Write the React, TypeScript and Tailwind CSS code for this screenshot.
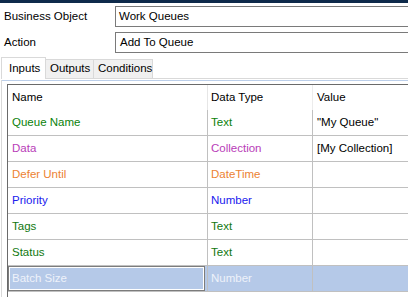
import React from "react";

// Input parameters of the action stage
const rows = [
  { name: "Queue Name", type: "Text", value: "\"My Queue\"", color: "text-[#0a820a]" },
  { name: "Data", type: "Collection", value: "[My Collection]", color: "text-[#b83cb8]" },
  { name: "Defer Until", type: "DateTime", value: "", color: "text-[#ec8232]" },
  { name: "Priority", type: "Number", value: "", color: "text-[#2020ee]" },
  { name: "Tags", type: "Text", value: "", color: "text-[#107810]" },
  { name: "Status", type: "Text", value: "", color: "text-[#107810]" },
];

const App = () => {
  return (
    <div className="w-[408px] h-[297px] overflow-hidden bg-white text-[11.5px] text-black font-['Liberation_Sans',Arial,sans-serif] leading-none">
      {/* title bar edge */}
      <div className="h-[3px] bg-[#0e2a4b]" />

      {/* Business object / action fields */}
      <div className="mt-[3px] flex h-[21px]">
        <div className="w-[115px] pl-[4px] flex items-center">Business Object</div>
        <div className="flex-1 border border-r-0 border-[#7a7a7a] pl-[3px] flex items-center">Work Queues</div>
      </div>
      <div className="mt-[5px] flex h-[21px]">
        <div className="w-[115px] pl-[4px] flex items-center">Action</div>
        <div className="flex-1 border border-r-0 border-[#7a7a7a] pl-[4px] flex items-center">Add To Queue</div>
      </div>

      {/* Tabs */}
      <div className="mt-[4px] ml-[1px] h-[22px] flex items-end border-b border-[#d9d9d9]">
        <div className="relative z-10 -mb-px h-[22px] w-[45px] bg-white border border-b-0 border-[#d9d9d9] pl-[7px] flex items-center">
          Inputs
        </div>
        <div className="h-[19px] w-[48px] bg-[#f0f0f0] border border-l-0 border-b-0 border-[#d9d9d9] pl-[4px] flex items-center">
          Outputs
        </div>
        <div className="h-[19px] w-[59px] bg-[#f0f0f0] border border-l-0 border-b-0 border-[#d9d9d9] pl-[4px] flex items-center">
          Conditions
        </div>
      </div>

      {/* Tab page */}
      <div className="ml-[1px] border-l border-[#d9d9d9] h-[220px]">
        <div className="mt-[1px] h-px bg-[#bccfea]" />
        <div className="mt-[3px] ml-[5px] h-[220px] border-t border-l border-[#6a6a6a]">
          {/* header */}
          <div className="grid grid-cols-[200px_105px_1fr] h-[25px]">
            <div className="pl-[4px] flex items-center border-r border-[#e6e6e6]">Name</div>
            <div className="pl-[3px] flex items-center border-r border-[#ececec]">Data Type</div>
            <div className="pl-[4px] flex items-center">Value</div>
          </div>

          {rows.map((row) => (
            <div key={row.name} className="grid grid-cols-[200px_105px_1fr] h-[26px] border-b border-[#c0c0c0]">
              <div className={`pl-[4px] flex items-center border-r border-[#c0c0c0] ${row.color}`}>{row.name}</div>
              <div className={`pl-[3px] flex items-center border-r border-[#c0c0c0] ${row.color}`}>{row.type}</div>
              <div className="pl-[4px] flex items-center">{row.value}</div>
            </div>
          ))}

          {/* selected row being edited */}
          <div className="grid grid-cols-[200px_105px_1fr] h-[26px] border-b border-[#c0c0c0] bg-[#b5c9e8]">
            <div className="pr-[2px] border-r border-[#c0c0c0] flex">
              <div className="flex-1 border border-[#7c7c7c]">
                <div className="h-full border border-white pl-[2px] flex items-center text-[#eef2fa]">Batch Size</div>
              </div>
            </div>
            <div className="pl-[3px] flex items-center border-r border-[#c0c0c0] text-[#eef2fa]">Number</div>
            <div />
          </div>
        </div>
      </div>
    </div>
  );
};

export default App;
